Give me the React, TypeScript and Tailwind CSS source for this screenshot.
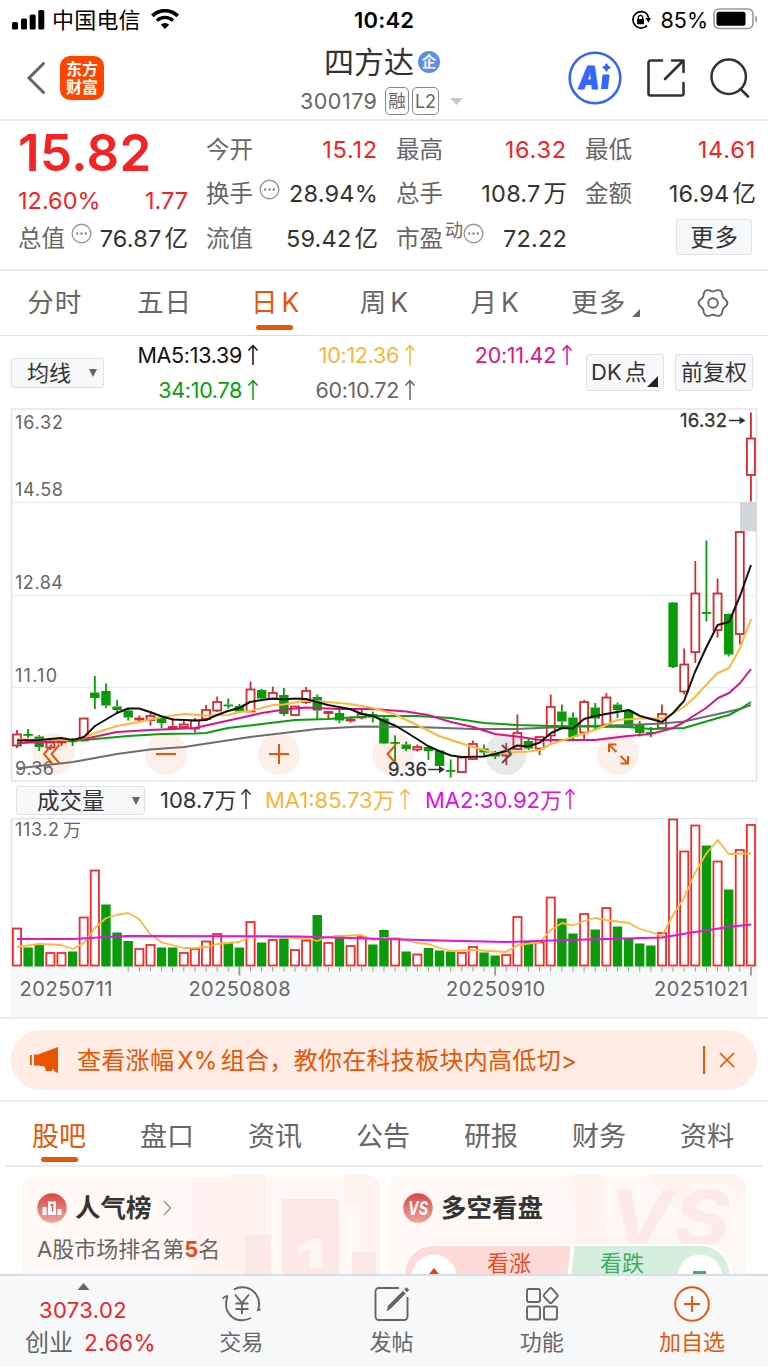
import React from "react";

type Candle = { up: boolean; top: number; bottom: number; high: number; low: number; vol: number };

const STEP = 11.12;
const X0 = 17;
const xOf = (i: number) => X0 + i * STEP;

// [direction, body top, body bottom, wick top, wick bottom, volume top]
const RAW: [number, number, number, number, number, number][] = [
  [1, 734, 746, 730, 748, 928], [0, 734, 735, 729, 738, 947.5], [0, 736.5, 747, 735, 751, 945],
  [1, 742, 748, 741, 750, 952.5], [1, 741, 743, 739, 746, 952.5], [0, 740.5, 741.5, 738, 746, 951.5],
  [1, 718, 741, 718, 741, 917], [0, 692.5, 698, 676, 709, 870], [0, 691, 705.5, 683.5, 708, 904.5],
  [0, 706.5, 710, 700, 713, 932.5], [0, 710.5, 717.5, 709, 720.5, 941], [1, 718, 720, 715.5, 721, 948.5],
  [1, 715.5, 720.5, 713, 725.5, 944.5], [0, 717.5, 723, 716, 728, 947.5], [0, 726.5, 728.5, 718, 730, 947.5],
  [1, 724, 727.5, 721, 728.5, 952.5], [1, 720, 729, 718, 732.5, 948.5], [1, 709.5, 719.5, 705, 720, 941],
  [1, 701.5, 711, 696.5, 712, 933.5], [0, 704.5, 705.5, 698.5, 708.5, 942.5], [0, 706, 711.5, 704, 712.5, 947.5],
  [1, 689, 712, 681.5, 712, 921.5], [0, 690, 698.5, 689, 699, 942.5], [1, 692.5, 699.5, 686.5, 700, 939.5],
  [0, 695, 714, 688, 716, 938.5], [1, 706, 715.5, 706, 715.5, 949.5], [1, 690.5, 702.5, 687, 704, 940],
  [0, 697, 710.5, 694.5, 719.5, 915], [1, 711.5, 713.5, 711, 719, 942.5], [0, 713, 720.5, 709.5, 723, 935.5],
  [1, 719, 721, 716.5, 722.5, 945.5], [1, 713.5, 718, 708.5, 719.5, 936.5], [0, 714, 717.5, 711.5, 722.5, 944.5],
  [0, 718.5, 743.5, 715, 744, 930], [0, 742, 743, 735.5, 761, 938], [0, 744.5, 749, 741.5, 751, 951.5],
  [1, 746.5, 750, 744.5, 751.5, 954], [0, 747, 751, 745.5, 760, 948], [0, 750.5, 766, 750, 766, 950.5],
  [0, 770, 771, 759.5, 777.5, 951.5], [1, 757, 772.5, 757, 772.5, 952.5], [1, 743.5, 759.5, 740.5, 760, 946.5],
  [0, 748.5, 752.5, 744.5, 756.5, 952.5], [0, 753.5, 756.5, 751, 759, 955.5], [1, 751, 756, 743, 765, 954.5],
  [1, 732.5, 749.5, 714.5, 750, 916.5], [0, 741, 748.5, 739, 750, 941], [1, 736.5, 749, 736, 755, 942],
  [1, 706.5, 736, 694.5, 742.5, 897], [0, 711.5, 721.5, 704.5, 727, 918.5], [0, 717.5, 737, 712.5, 739, 933.5],
  [1, 701.5, 733, 700, 740.5, 913.5], [0, 707.5, 718.5, 703, 729.5, 929.5], [1, 697, 725, 693, 728, 907.5],
  [0, 704.5, 710, 702.5, 718, 926.5], [0, 710.5, 727.5, 710, 728, 938.5], [0, 724.5, 733, 721, 736.5, 943.5],
  [0, 732, 733, 727, 737, 945.5], [1, 713.5, 728.5, 704.5, 729, 932.5], [0, 602.5, 667, 602, 668, 819],
  [1, 664, 692, 648.5, 694.5, 851], [1, 593, 652.5, 561, 663, 825], [0, 612, 613, 540.5, 621.5, 845.5],
  [1, 593, 630.5, 578.5, 637.5, 861], [0, 614, 654.5, 613.5, 656.5, 889.5], [1, 531.5, 634.5, 531, 644.5, 849.5],
  [1, 438, 475.5, 412.5, 501.5, 824.5],
].map((r, i) => (i === 14 ? [1, ...r.slice(1)] : r)) as [number, number, number, number, number, number][];
const CANDLES: Candle[] = RAW.map(([d, top, bottom, high, low, vol]) => ({ up: d === 1, top, bottom, high, low, vol }));
// sessions whose volume bar is coloured against the previous close rather than the open
const VOL_FLIP = new Set([7, 14, 34, 59]);

const MA5 = "17,740.5 39,740 61,738 73,740 84,737 95,726 106,719.5 117,713 128,708.5 139,708.5 150,712 162,716.5 173,719.5 195,720.5 206,720 217,715 228,711 239,708 250,702 262,700 273,698.5 284,699.5 295,698.5 306,699 317,702 328,705 339,707 350,709 362,714 373,716 384,721 395,725.5 406,732 417,739 428,746 439,751 451,755.5 462,757 484,756.5 495,754 506,751 517,745.5 528,746.5 540,742.5 551,733 562,728 573,728.5 584,719 595,716 617,712 629,710 640,716 651,719 662,722 673,713 684,701 695,672 706,648 717.6,625 729,622 740,596 751,565";
const MA10 = "17,739 28,739.5 73,740 84,737.5 95,733 117,726 139,722 162,717 184,714 206,715.5 228,715 240,712 250,711 273,705 284,704.5 306,700.5 328,702 350,704 373,708 395,714.5 417,725 439,736 451,740 473,747 495,753 506,753 517,752 528,751.5 540,750 551,744 573,737 595,730 617,720 640,718.5 662,718.5 673,713.5 684,707 695,697 706,685 717,673.5 729,668 740,648 751,619";
const MA20 = "17,743 50,742 84,739 117,732 150,730 173,729 195,728 217,723 240,718 262,713 284,709.5 306,707.5 339,709 373,709 406,711.5 428,715 451,722 473,727 495,734 517,736.5 540,740 595,740 628,736 651,734 673,728 684,722 706,708 718,698 729,693 740,683 751,669";
const MA34 = "17,744 28,742 84,740 128,736 162,734 195,733.5 206,733 228,728 262,724 295,720 328,719 373,716 417,716 451,718 484,723 517,725 551,726 628,727 651,729 684,728 718,718 729,715 740,709 751,702";
const MA60 = "17,768.5 73,762 117,754 150,749.5 184,747 217,742 250,737 284,733 317,729 361,726.5 417,727 473,729 517,729 573,726.5 628,725 662,723.5 684,721.5 718,714 740,709 751,705";
const VMA1 = "17,947 39,944 61,945 73,949 84,943 95,928 106,918 117,915 128,913 139,919 150,934 162,942.5 184,948 195,948 206,947 217,944 239,942 250,937 262,936 295,938 306,938 317,941 328,937 340,936 361,935 373,940 384,938 406,940 417,943 428,944 440,948 451,951 473,950 506,952 518,945 540,942 551,930 562,923 573,925.5 584,921 595,918 606,920 629,923 640,929 651,932 662,936 673,915 684,898 695,873 706,854 717.6,840 728.7,854 751,853.5";
const VMA2 = "17,939 73,939 106,937 128,936 300,936.5 384,939 440,940.5 506,942 551,940.5 662,937.5 695,932 706,930.5 728,927 751,924.5";

// six-lobed outline of the settings icon
const GEAR = Array.from({ length: 72 }, (_, k) => {
  const a = (k * Math.PI) / 36;
  const r = 13 + 1.35 * Math.cos(6 * a);
  return `${(16 + r * Math.cos(a)).toFixed(2)},${(15 + r * Math.sin(a)).toFixed(2)}`;
}).join(" ");

function MoreDots() {
  return (
    <svg width="21" height="21" viewBox="0 0 21 21" className="shrink-0">
      <circle cx="10.5" cy="10.5" r="9.3" fill="none" stroke="#999" strokeWidth="1.4" />
      <circle cx="6.2" cy="10.5" r="1.2" fill="#888" />
      <circle cx="10.5" cy="10.5" r="1.2" fill="#888" />
      <circle cx="14.8" cy="10.5" r="1.2" fill="#888" />
    </svg>
  );
}

function UpArrow() {
  return (
    <svg width="12" height="22" viewBox="0 0 12 22" className="mb-[2px] shrink-0">
      <path d="M6 21V1.5M1.500 6.500 6 1.5 10.500 6.500" fill="none" stroke="currentColor" strokeWidth="1.5" />
    </svg>
  );
}

function StatusBar() {
  return (
    <div className="flex h-[40px] items-center pl-[12px] pr-[9px] text-black">
      <div className="flex w-[342px] items-center">
        <svg width="33" height="20" viewBox="0 0 33 20">
          <rect x="0" y="12" width="6" height="7.5" rx="1.6" />
          <rect x="9" y="8.5" width="6" height="11" rx="1.6" />
          <rect x="17.7" y="4.5" width="6" height="15" rx="1.6" />
          <rect x="26.3" y="0" width="6" height="19.5" rx="1.6" />
        </svg>
        <span className="ml-[7px] text-[22px] leading-[30px] tracking-[0.2px]">中国电信</span>
        <svg width="28" height="20" viewBox="0 0 28 20" className="mb-[3px] ml-[10px]">
          <path d="M14 20 9.8 15.8a6 6 0 0 1 8.4 0Z" />
          <path d="M6 11.6a11.5 11.5 0 0 1 16 0" fill="none" stroke="#000" strokeWidth="3.4" />
          <path d="M1.3 6.9a18 18 0 0 1 25.4 0" fill="none" stroke="#000" strokeWidth="3.6" />
        </svg>
      </div>
      <span className="w-[62px] whitespace-nowrap text-[22px] font-semibold tracking-[0.2px]">10:42</span>
      <div className="ml-auto flex items-center">
        <svg width="20" height="20" viewBox="0 0 20 20" fill="none" stroke="#000" strokeWidth="1.7">
          <path d="M16.6 4.8A8.2 8.2 0 1 0 16 15.600" />
          <path d="M14.500 8h5.500l-2.600 4.500z" fill="#000" stroke="none" />
          <path d="M16 4.200q1.600 2 1.700 5" />
          <rect x="6" y="9" width="7" height="5.3" rx="0.8" fill="#000" stroke="none" />
          <path d="M7.3 9V7.6a2.2 2.2 0 0 1 4.4 0V9" strokeWidth="1.3" />
        </svg>
        <span className="ml-[10px] text-[21.5px]">85%</span>
        <svg width="46" height="22" viewBox="0 0 46 22" className="mb-[2px] ml-[5px]">
          <rect x="1" y="1" width="39" height="19.5" rx="5" fill="none" stroke="#999" strokeWidth="1.6" />
          <rect x="3.5" y="3.7" width="29" height="14" rx="2.5" />
          <path d="M42.3 7.5c2.6.8 2.6 6.2 0 7z" fill="#999" />
        </svg>
      </div>
    </div>
  );
}

function Header() {
  return (
    <header className="flex h-[81px] border-b-2 border-[#ebebed]">
      <div className="flex w-[300px] items-center pb-[3px] pl-[26px]">
        <svg width="20" height="34" viewBox="0 0 20 34" fill="none" stroke="#666" strokeWidth="3" strokeLinecap="round">
          <path d="M17.500 2.500 3 17l14.500 14.500" />
        </svg>
        <div className="ml-[14px] grid h-[44px] w-[44px] grid-cols-2 place-content-center rounded-[10px] bg-[#ff4400] px-[6px] text-center text-[16px] font-bold leading-[18px] text-white">
          <span>东</span><span>方</span><span>财</span><span>富</span>
        </div>
      </div>
      <div className="w-[240px]">
        <div className="flex h-[44px] items-center pl-[24px]">
          <span className="text-[30px] leading-[44px] text-[#333]">四方达</span>
          <span className="ml-[4px] flex h-[22px] w-[22px] items-center justify-center rounded-full bg-[#5f8ee6] text-[14.500px] font-bold leading-none text-white">企</span>
        </div>
        <div className="flex h-[34px] items-center text-[#666]">
          <span className="w-[85px] text-[21.500px] tracking-[0.500px]">300179</span>
          <span className="flex h-[28px] w-[24px] items-center justify-center rounded-[5px] border border-[#888] text-[17.500px]">融</span>
          <span className="ml-[3px] flex h-[28px] w-[27px] items-center justify-center rounded-[5px] border border-[#888] text-[18px]">L2</span>
          <svg width="13" height="7" viewBox="0 0 13 7" className="ml-[11px]"><path d="M0 0h13L6.500 7z" fill="#c8c8c8" /></svg>
        </div>
      </div>
      <div className="flex items-center gap-[25px] pb-[3px] pl-[28px]">
        <svg width="54" height="54" viewBox="0 0 54 54">
          <circle cx="27" cy="27" r="25.300" fill="none" stroke="#3366ff" strokeWidth="2.600" />
          <text x="10.500" y="38" fontSize="32" fontWeight="900" fontStyle="italic" fill="#3366ff" stroke="#3366ff" strokeWidth="0.800" textLength="21" lengthAdjust="spacingAndGlyphs">A</text>
          <path d="M34.500 23.500h7l-1.500 14.500h-7z" fill="#3366ff" />
          <path d="M38.500 12.500q.900 3.100 4 4-3.100.900-4 4-.900-3.100-4-4 3.100-.900 4-4z" fill="#3366ff" stroke="#3366ff" />
        </svg>
        <svg width="38" height="38" viewBox="0 0 38 38" fill="none" stroke="#333" strokeWidth="2.600" strokeLinecap="round" strokeLinejoin="round">
          <path d="M15 1.500H3.500a2 2 0 0 0-2 2v31a2 2 0 0 0 2 2h31a2 2 0 0 0 2-2V24" />
          <path d="M25 1.500h11.500V13M36 2 18 20" />
        </svg>
        <svg width="40" height="40" viewBox="0 0 40 40" fill="none" stroke="#333" strokeWidth="2.500" strokeLinecap="round">
          <circle cx="18.700" cy="18.700" r="17.200" />
          <path d="m30.500 31 7.500 7.500" />
        </svg>
      </div>
    </header>
  );
}

function Cell({ label, value, red, dots, sup }: { label: string; value: string; red?: boolean; dots?: boolean; sup?: string }) {
  const m = value.match(/^([\d.%]+)(.*)$/)!;
  return (
    <div className="flex h-[44.500px] items-center whitespace-nowrap">
      <span className="text-[23.500px] text-[#666]">{label}</span>
      {sup && <span className="mb-[14px] ml-[2px] text-[18px] leading-[20px] text-[#666]">{sup}</span>}
      {dots && <span className={sup ? "mb-[9px]" : "mb-[9px] ml-[6px]"}><MoreDots /></span>}
      <span className={`ml-auto text-[23.500px] ${red ? "tracking-[0.800px] text-[#f52323]" : "tracking-[0.200px] text-[#333]"}`}>
        {m[1]}
        {m[2] && <span className="ml-[3px] tracking-normal">{m[2]}</span>}
      </span>
    </div>
  );
}

function Quote() {
  return (
    <section className="flex h-[150px] border-b-2 border-[#ebebed] pl-[18px] pt-[6px]">
      <div className="w-[170px]">
        <div className="flex h-[51px] items-center text-[51px] font-semibold leading-none tracking-[0.400px] text-[#f52323]">15.82</div>
        <div className="flex h-[46px] items-center justify-between text-[23.500px] text-[#f52323]">
          <span>12.60%</span><span>1.77</span>
        </div>
        <div className="-mt-[8px]"><Cell label="总值" value="76.87亿" dots /></div>
      </div>
      <div className="ml-[18px] w-[172px]">
        <Cell label="今开" value="15.12" red />
        <Cell label="换手" value="28.94%" dots />
        <Cell label="流值" value="59.42亿" />
      </div>
      <div className="ml-[18px] w-[171px]">
        <Cell label="最高" value="16.32" red />
        <Cell label="总手" value="108.7万" />
        <Cell label="市盈" value="72.22" sup="动" dots />
      </div>
      <div className="ml-[18px] w-[171px]">
        <Cell label="最低" value="14.61" red />
        <Cell label="金额" value="16.94亿" />
        <div className="flex justify-end pr-[4px] pt-[3px]">
          <button className="h-[36px] w-[76px] rounded-[3px] border border-[#dfe1e6] bg-[#f7f8fa] pl-px text-[23.500px] leading-[35px] tracking-[0.800px] text-[#333]">更多</button>
        </div>
      </div>
    </section>
  );
}

function PeriodTabs() {
  const tab = "flex w-[109.700px] items-center justify-center";
  return (
    <nav className="flex h-[65px] border-b border-[#dcdde2] text-[26.500px] tracking-[1px] text-[#666]">
      <div className={tab}>分时</div>
      <div className={tab}>五日</div>
      <div className={`${tab} relative pl-[3px] text-[#ea5504]`}>
        日<span className="ml-[3px]">K</span>
        <span className="absolute bottom-[5px] left-[37px] h-[5px] w-[37px] rounded-full bg-[#ea5504]" />
      </div>
      <div className={`${tab} pl-[1px]`}>周<span className="ml-[3px]">K</span></div>
      <div className={`${tab} pl-[3px]`}>月<span className="ml-[3px]">K</span></div>
      <div className={`${tab} pl-[5px]`}>
        更多
        <svg width="8" height="8" viewBox="0 0 8 8" className="ml-[6px] mt-[20px]"><path d="M8 0v8H0z" fill="#666" /></svg>
      </div>
      <div className={tab}>
        <svg width="32" height="30" viewBox="0 0 32 30" fill="none" stroke="#666" strokeWidth="1.900" strokeLinejoin="round">
          <polygon points={GEAR} />
          <circle cx="16" cy="15" r="4.800" />
        </svg>
      </div>
    </nav>
  );
}

function Ma({ text, tone, box }: { text: string; tone: string; box: string }) {
  return (
    <span className={`flex items-center justify-end gap-[5px] whitespace-nowrap text-[21.500px] tracking-[-0.300px] ${tone} ${box}`}>
      {text}<UpArrow />
    </span>
  );
}

function MaRow() {
  return (
    <div className="flex h-[72px] pl-[11px]">
      <button className="mt-[22px] flex h-[30px] w-[93px] items-center rounded-[3px] border border-[#dfe1e6] bg-[#f7f8fa] pl-[15px] text-[22px] leading-[28px] text-[#333]">
        均线
        <svg width="8" height="8" viewBox="0 0 8 8" className="ml-[18px]"><path d="M0 0h8L4 8z" fill="#666" /></svg>
      </button>
      <div className="w-[470px] pt-[2px]">
        <div className="flex h-[35px] items-center">
          <Ma text="MA5:13.39" tone="text-[#111]" box="w-[155px]" />
          <Ma text="10:12.36" tone="text-[#fcb53b]" box="w-[157px]" />
          <Ma text="20:11.42" tone="text-[#e0128c]" box="w-[157px]" />
        </div>
        <div className="flex h-[35px] items-center">
          <Ma text="34:10.78" tone="text-[#0a9f0a]" box="w-[155px]" />
          <Ma text="60:10.72" tone="text-[#666]" box="w-[157px]" />
        </div>
      </div>
      <button className="ml-[12px] mt-[18px] flex h-[37px] w-[78px] items-end whitespace-nowrap rounded-[3px] border border-[#dfe1e6] bg-[#f7f8fa] pb-[3px] pl-[4px] text-[22px] leading-[30px] text-[#333]">
        DK<span className="ml-[3px]">点</span>
        <svg width="11" height="11" viewBox="0 0 11 11" className="shrink-0"><path d="M11 0v11H0z" fill="#222" /></svg>
      </button>
      <button className="ml-[11px] mt-[18px] h-[37px] w-[78px] whitespace-nowrap rounded-[3px] border border-[#dfe1e6] bg-[#f7f8fa] text-[22px] leading-[35px] text-[#333]">前复权</button>
    </div>
  );
}

function Line({ points, color, width = 2 }: { points: string; color: string; width?: number }) {
  return <polyline points={points} fill="none" stroke={color} strokeWidth={width} strokeLinejoin="round" />;
}

function PriceChart() {
  return (
    <svg width="768" height="374" viewBox="0 408 768 374" className="block">
      <rect x="11.500" y="409" width="745" height="372" fill="#fff" stroke="#e3e4ea" strokeWidth="1.500" />
      {[502.500, 595.500, 687.500].map((y) => <path key={y} d={`M12 ${y}H756`} stroke="#eceef3" strokeWidth="1.500" />)}
      <rect x="740" y="502" width="16.500" height="29.500" fill="#d3d7dc" />
      {[53.500, 166, 279, 393, 618].map((x) => <circle key={x} cx={x} cy="754" r="21" fill="#fdf0ea" />)}
      <circle cx="506" cy="754" r="21" fill="#e9e9ea" />
      <g fill="#666" fontSize="18">
        <text x="15" y="429" textLength="48">16.32</text>
        <text x="15" y="496" textLength="48">14.58</text>
        <text x="15" y="589" textLength="48">12.84</text>
        <text x="15" y="682" textLength="42">11.10</text>
        <text x="15" y="775" textLength="39">9.36</text>
      </g>
      {CANDLES.map((c, i) => {
        const x = xOf(i);
        const color = c.up ? "#d9292c" : "#0a9a0a";
        return (
          <g key={i} stroke={color} strokeWidth="1.800">
            <path d={`M${x} ${c.high}V${c.top}M${x} ${c.bottom}V${c.low}`} />
            {c.up ? (
              <rect x={x - 4} y={c.top + 0.500} width="8" height={Math.max(1, c.bottom - c.top - 1)} fill="none" />
            ) : (
              <rect x={x - 4.700} y={c.top} width="9.400" height={Math.max(1.800, c.bottom - c.top)} fill={color} stroke="none" />
            )}
          </g>
        );
      })}
      <Line points={MA60} color="#6e6e6e" />
      <Line points={MA34} color="#0c9f0c" />
      <Line points={MA20} color="#df1288" />
      <Line points={MA10} color="#fdb93c" />
      <Line points={MA5} color="#111" />
      <g fill="none" stroke="#ea5504" strokeWidth="2">
        <path d="M52 744.500 44 754l8 9.500M59.500 744.500l-8 9.500 8 9.500" />
        <path d="M156 754h20M269 754h20M279 744v20M396 744.500 387.500 754l8.500 9.500" />
        <path d="M609 752v-7.500h7.500M609 744.500l7.500 7.500M620.500 763.500h7.500V756M628 763.500l-7.500-7.500" />
      </g>
      <path d="m502 745 9 9-9 9" fill="none" stroke="#555" strokeWidth="2" />
      <g fill="#333" stroke="#333" fontSize="18.500">
        <text x="680" y="427" textLength="47" strokeWidth="0.300">16.32</text>
        <path d="M729 420.500h12" strokeWidth="1.500" />
        <path d="m739.500 416.800 6 3.700-6 3.700z" stroke="none" />
        <text x="388" y="776" textLength="39" strokeWidth="0.300">9.36</text>
        <path d="M428 769.500h12" strokeWidth="1.500" />
        <path d="m439 765.800 6 3.700-6 3.700z" stroke="none" />
      </g>
    </svg>
  );
}

function VolumeRow() {
  return (
    <div className="flex h-[36px] items-center whitespace-nowrap pl-[16px] text-[22px]">
      <button className="mt-px flex h-[29px] w-[129px] items-center rounded-[3px] border border-[#dfe1e6] bg-[#f7f8fa] pl-[20px] text-[22.500px] leading-[27px] text-[#333]">
        成交量
        <svg width="8" height="8" viewBox="0 0 8 8" className="ml-[27px]"><path d="M0 0h8L4 8z" fill="#666" /></svg>
      </button>
      <span className="ml-[15px] flex w-[105px] items-center gap-[4px] text-[#333]">108.7万<UpArrow /></span>
      <span className="flex w-[160px] items-center gap-[4px] text-[#fcb53b]">MA1:85.73万<UpArrow /></span>
      <span className="flex items-center gap-[2px] text-[#e312e3]">MA2:30.92万<UpArrow /></span>
    </div>
  );
}

function VolumeChart() {
  return (
    <svg width="768" height="201" viewBox="0 818 768 201" className="block">
      <rect x="11" y="966" width="746" height="51.500" fill="#f7f8fa" />
      <path d="M11.500 966V818.500H756.500V966" fill="none" stroke="#e3e4ea" strokeWidth="1.500" />
      <text x="15" y="836" fontSize="18" fill="#666" textLength="44">113.2</text>
      <text x="63" y="836.500" fontSize="18" fill="#666">万</text>
      {CANDLES.map((c, i) => {
        const x = xOf(i);
        const up = VOL_FLIP.has(i) ? !c.up : c.up;
        return up ? (
          <rect key={i} x={x - 4.100} y={c.vol + 0.500} width="8.200" height={965 - c.vol} fill="none" stroke="#f52a2a" strokeWidth="1.800" />
        ) : (
          <rect key={i} x={x - 4.700} y={c.vol} width="9.400" height={966.500 - c.vol} fill="#0a9a0a" />
        );
      })}
      {CANDLES.map((_, i) =>
        i < 10 ? null : (
          <path key={i} d={`M${xOf(i)} 967V${i === 20 || i === 43 || i === 66 ? 975.500 : 971.500}`} stroke="#999" strokeWidth={i === 20 || i === 43 || i === 66 ? 1.800 : 1} />
        )
      )}
      <Line points={VMA1} color="#fdb93c" width={1.800} />
      <Line points={VMA2} color="#e014e0" />
      <g fill="#666" fontSize="20">
        <text x="19.500" y="995.500" textLength="93">20250711</text>
        <text x="188.500" y="995.500" textLength="102">20250808</text>
        <text x="446" y="995.500" textLength="99">20250910</text>
        <text x="654" y="995.500" textLength="94">20251021</text>
      </g>
      <path d="M0 1018H768" stroke="#e6e7eb" strokeWidth="1.500" />
    </svg>
  );
}

function Banner() {
  return (
    <div className="h-[83px] border-b-2 border-[#ebebed] px-[11px] pt-[11px]">
      <div className="flex h-[60px] items-center rounded-full bg-[#feece5] pl-[18px] text-[#ea5504]">
        <svg width="30" height="26" viewBox="0 0 30 26" fill="#ea5504">
          <path d="M1 8h1.800v10H1zM5 7.500h4L29 0v26L25 24v-1.500h-2V24h-6l-1.500-4.500L9 18.500H5z" />
        </svg>
        <span className="ml-[18px] mt-[2px] w-[626px] whitespace-nowrap text-[24px] tracking-[0.300px]">查看涨幅<span className="mx-[3px]">X%</span>组合，教你在科技板块内高低切&gt;</span>
        <span className="h-[28px] w-[1.500px] bg-[#ea5504]" />
        <svg width="16" height="16" viewBox="0 0 16 16" className="ml-[14px]"><path d="m1 1 14 14M15 1 1 15" stroke="#ea5504" strokeWidth="1.700" /></svg>
      </div>
    </div>
  );
}

function ContentTabs() {
  const tabs = ["股吧", "盘口", "资讯", "公告", "研报", "财务", "资料"];
  return (
    <nav className="mx-[5px] flex h-[65px] border-b-2 border-[#ebebed] text-[27px] text-[#666]">
      {tabs.map((t, i) => (
        <div key={t} className={i === 0 ? "relative w-[108px] pt-[14px] text-center leading-[42px] text-[#ea5504]" : "w-[108px] pt-[14px] text-center leading-[42px]"}>
          {t}
          {i === 0 && <span className="absolute bottom-[3px] left-[36px] h-[5px] w-[37px] rounded-full bg-[#ea5504]" />}
        </div>
      ))}
    </nav>
  );
}

function Cards() {
  return (
    <div className="flex h-[107px] gap-[8px] overflow-hidden pl-[22px] pt-[8px]">
      <div className="relative h-[140px] w-[358px] shrink-0 overflow-hidden rounded-[14px] bg-[#fff8f5] pl-[15px] pt-[17px]">
        <svg width="358" height="100" viewBox="22 1175 358 100" className="absolute left-0 top-0">
          <path d="M193 1182h38v-7h35v99h-73z" fill="#fff2ef" />
          <path d="M345 1175h35v99h-21v-70h-14z" fill="#fff3f0" />
          <path d="M245 1235h26v40h-26zM282 1199h57v76h-57zM352 1252h24v23h-24z" fill="#fce8e6" />
          <path d="m298 1246 12-7h12v29h-13v-18l-11 3z" fill="#fff5f2" />
        </svg>
        <div className="relative flex h-[32px] items-center">
          <svg width="30" height="30" viewBox="0 0 30 30">
            <defs><linearGradient id="rank" x1="0" y1="0" x2="0" y2="1"><stop offset="0" stopColor="#d94848" /><stop offset="1" stopColor="#f0a49c" /></linearGradient></defs>
            <circle cx="15" cy="15" r="14.700" fill="url(#rank)" />
            <path d="M5.500 14h4v8h-4zM11 8.500h8V22h-8zM20.500 16h4v6h-4z" fill="#fff" />
            <path d="m13.500 12.500 2-1v7" fill="none" stroke="#d95a58" strokeWidth="1.500" />
          </svg>
          <span className="ml-[8px] text-[25.500px] font-bold leading-[32px] text-[#333]">人气榜</span>
          <svg width="9" height="16" viewBox="0 0 9 16" className="ml-[11px]"><path d="m1 1 6.500 7L1 15" fill="none" stroke="#999" strokeWidth="1.500" /></svg>
        </div>
        <div className="relative mt-[9px] text-[22px] leading-[32px] text-[#666]">A股市场排名第<b className="text-[#ea4c14]">5</b>名</div>
      </div>
      <div className="relative h-[140px] w-[358px] shrink-0 overflow-hidden rounded-[14px] bg-[#fff8f5] pl-[15px] pt-[17px]">
        <svg width="358" height="100" viewBox="388 1175 358 100" className="absolute left-0 top-0">
          <path d="M573 1175h30l6 100h-30zM650 1175h96v24q-20-22-52-14l-20 25z" fill="#fff2ef" />
          <text x="608" y="1245" fontSize="76" fontWeight="700" fontStyle="italic" fill="#fdeae8" textLength="122" lengthAdjust="spacingAndGlyphs">VS</text>
        </svg>
        <div className="relative flex h-[32px] items-center">
          <svg width="30" height="30" viewBox="0 0 30 30">
            <circle cx="15" cy="15" r="14.700" fill="url(#rank)" />
            <text x="5" y="22" fontSize="19" fontWeight="700" fontStyle="italic" fill="#fff" textLength="20" lengthAdjust="spacingAndGlyphs">VS</text>
          </svg>
          <span className="ml-[8px] text-[25.500px] font-bold leading-[32px] text-[#333]">多空看盘</span>
        </div>
        <div className="relative mt-[20px] flex h-[60px] w-[328px] overflow-hidden rounded-full border-2 border-white">
          <svg width="324" height="60" viewBox="0 0 324 60" className="absolute left-0 top-0">
            <path d="M0 0h167l-6 60H0z" fill="#fedad8" />
            <path d="M167 0h157v60H161z" fill="#d5eedd" />
            <path d="M167.500 0 161 60" stroke="#fff" strokeWidth="4" />
            <circle cx="29" cy="31" r="22.500" fill="#fff" />
            <path d="m29 22 6.500 8h-13z" fill="#e8410f" />
            <circle cx="295" cy="31" r="22.500" fill="#fff" />
            <rect x="288" y="25" width="13" height="4" fill="#3cae63" />
          </svg>
          <span className="relative ml-[82px] text-[22px] leading-[34px] text-[#ea4c28]">看涨</span>
          <span className="relative ml-[69px] text-[22px] leading-[34px] text-[#3cae63]">看跌</span>
        </div>
      </div>
    </div>
  );
}

function NavItem({ label, tone, children }: { label: string; tone: string; children: React.ReactNode }) {
  return (
    <div className={`flex w-[150.300px] flex-col items-center pt-[9px] text-[22px] ${tone}`}>
      <svg width="40" height="38" viewBox="0 0 40 38" fill="none" stroke="currentColor" strokeWidth="1.900">{children}</svg>
      <span className="mt-[3px] leading-[32px]">{label}</span>
    </div>
  );
}

function BottomNav() {
  return (
    <footer className="flex h-[93px] border-t-2 border-[#dbdde2] bg-[#f7f8fa] pl-[16px]">
      <div className="w-[150px] text-[#f52323]">
        <svg width="13" height="7" viewBox="0 0 12 7" className="ml-[61px] mt-[7px] block"><path d="M6 0l6 7H0z" fill="#666" /></svg>
        <div className="mt-[4px] pl-[23px] text-[22px] leading-[32px] tracking-[0.400px]">3073.02</div>
        <div className="flex pl-[9px] text-[22.500px] leading-[34px]"><span className="text-[24px] text-[#666]">创业</span><span className="ml-[11px] tracking-[0.500px]">2.66%</span></div>
      </div>
      <NavItem label="交易" tone="text-[#666]">
        <path d="M13 4.500Q17 2 22 2.200A16.800 16.800 0 0 1 37 25l2.500-.500M1.500 13.500 5.500 11q1-.500.800 1Q2.500 24 10 31q8 7.500 20 2" />
        <path d="m14 9.500 7 8.500 7-8.500M14.500 18.500h13M14.500 24h13M21 18v11" />
      </NavItem>
      <NavItem label="发帖" tone="text-[#666]">
        <path d="M28 3H8a3.500 3.500 0 0 0-3.500 3.500v25A3.500 3.500 0 0 0 8 35h25a3.500 3.500 0 0 0 3.500-3.500V12" />
        <path d="m16 26 1.500-5.500L32 6l2.500 2.500L20 23zM33.500 4.500l2-2 2.500 2.500-2 2z" fill="currentColor" strokeWidth="0.600" />
      </NavItem>
      <NavItem label="功能" tone="text-[#666]">
        <rect x="5" y="4" width="13" height="13" rx="2" /><rect x="5" y="21.500" width="13" height="13" rx="2" /><rect x="22" y="21.500" width="13" height="13" rx="2" />
        <path d="m27.400 3.600-5.200 5.700a1.800 1.800 0 0 0 0 2.500l5.200 5.700a1.800 1.800 0 0 0 2.500 0l5.200-5.700a1.800 1.800 0 0 0 0-2.500l-5.200-5.700a1.800 1.800 0 0 0-2.500 0z" />
      </NavItem>
      <NavItem label="加自选" tone="text-[#ea5504]">
        <circle cx="20" cy="19" r="16.800" /><path d="M20 11v16M12 19h16" />
      </NavItem>
    </footer>
  );
}

export default function App() {
  return (
    <main className="h-[1366px] w-[768px] overflow-hidden bg-white font-['Inter','Noto_Sans_CJK_SC',sans-serif]">
      <StatusBar />
      <Header />
      <Quote />
      <PeriodTabs />
      <MaRow />
      <PriceChart />
      <VolumeRow />
      <VolumeChart />
      <Banner />
      <ContentTabs />
      <Cards />
      <BottomNav />
    </main>
  );
}
